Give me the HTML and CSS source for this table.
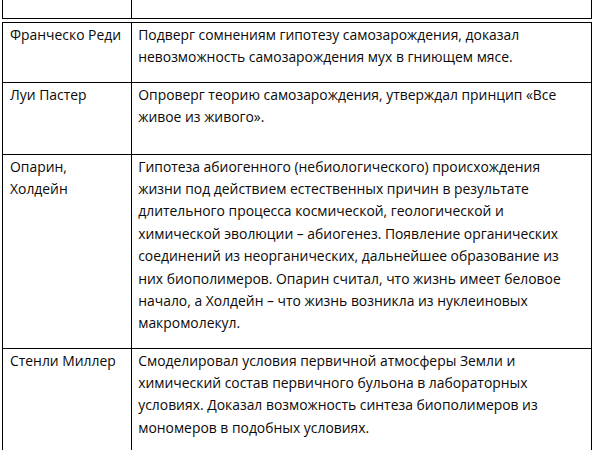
FILE: index.html
```html
<!DOCTYPE html>
<html lang="ru">
<head>
<meta charset="utf-8">
<link rel="stylesheet" href="styles.css">
</head>
<body>
<div class="page">
  <table class="tbl tbl-top">
    <tr class="row-top"><td class="c1"></td><td class="c2"></td></tr>
  </table>
  <table class="tbl tbl-main">
    <tr class="row-1">
      <td class="c1">Франческо Реди</td>
      <td class="c2">Подверг сомнениям гипотезу самозарождения, доказал<br>невозможность самозарождения мух в гниющем мясе.</td>
    </tr>
    <tr class="row-2">
      <td class="c1">Луи Пастер</td>
      <td class="c2">Опроверг теорию самозарождения, утверждал принцип «Все<br>живое из живого».</td>
    </tr>
    <tr class="row-3">
      <td class="c1">Опарин,<br>Холдейн</td>
      <td class="c2">Гипотеза абиогенного (небиологического) происхождения<br>жизни под действием естественных причин в результате<br>длительного процесса космической, геологической и<br>химической эволюции – абиогенез. Появление органических<br>соединений из неорганических, дальнейшее образование из<br>них биополимеров. Опарин считал, что жизнь имеет беловое<br>начало, а Холдейн – что жизнь возникла из нуклеиновых<br>макромолекул.</td>
    </tr>
    <tr class="row-4">
      <td class="c1">Стенли Миллер</td>
      <td class="c2">Смоделировал условия первичной атмосферы Земли и<br>химический состав первичного бульона в лабораторных<br>условиях. Доказал возможность синтеза биополимеров из<br>мономеров в подобных условиях.</td>
    </tr>
  </table>
</div>
</body>
</html>
```
FILE: styles.css
```css
html, body {
  margin: 0;
  padding: 0;
  background: #fff;
}
.page {
  width: 599px;
  height: 450px;
  overflow: hidden;
  padding-left: 2px;
  box-sizing: border-box;
}
.tbl {
  border-collapse: collapse;
  table-layout: fixed;
  width: 590px;
  font-family: "Open Sans", "Noto Sans", sans-serif;
  font-size: 13.9px;
  line-height: 22.4px;
  color: #0a0a0a;
}
.tbl td {
  box-sizing: border-box;
  border: 1px solid #000;
  vertical-align: top;
  padding: 1px 4px 0 7px;
  white-space: nowrap;
  overflow: hidden;
}
.tbl .c1 { width: 129px; }
.tbl .c2 { width: 459px; padding-left: 6px; }
.tbl-top td { border-top: none; height: 18px; padding: 0; }
.tbl-main { margin-top: 3px; }
.row-1 td { height: 60px; }
.row-2 td { height: 72px; }
.row-3 td { height: 194px; }
.row-4 td { height: 120px; border-bottom: none; }
```
